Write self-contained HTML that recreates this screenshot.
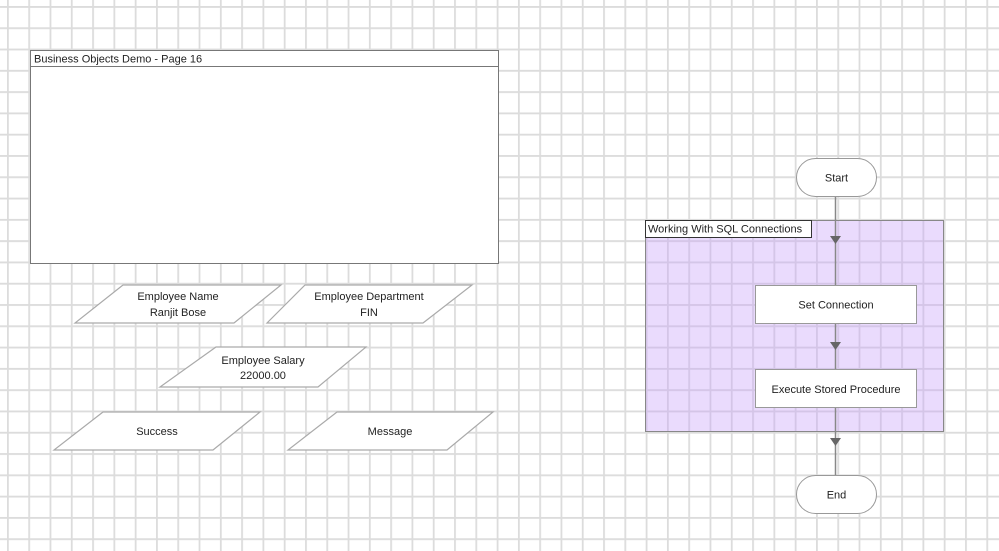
<!DOCTYPE html>
<html><head><meta charset="utf-8"><style>
html,body{margin:0;padding:0;background:#fff;}
svg{display:block;}
text{font-family:"Liberation Sans",sans-serif;font-size:11px;fill:#222;}
</style></head><body>
<svg width="999" height="551" viewBox="0 0 999 551" xmlns="http://www.w3.org/2000/svg">
<defs>
<pattern id="g" x="7" y="6" width="21.29" height="21.29" patternUnits="userSpaceOnUse">
<path d="M0.9 0V21.29M0 0.9H21.29" stroke="#dcdcdc" stroke-width="1.8" fill="none"/>
</pattern>
</defs>
<rect width="999" height="551" fill="#fff"/>
<rect width="999" height="551" fill="url(#g)"/>

<!-- page box -->
<rect x="30.5" y="50.5" width="468" height="213" fill="#fff" stroke="#777"/>
<line x1="30.5" y1="66.5" x2="498.5" y2="66.5" stroke="#777"/>
<text x="34" y="62.5">Business Objects Demo - Page 16</text>

<!-- parallelograms -->
<g fill="#fff" stroke="#aaa" stroke-width="1.2">
<polygon points="123,285 281,285 234,323 75,323"/>
<polygon points="305,285 472,285 423,323 267,323"/>
<polygon points="216,347 366,347 318,387 160,387"/>
<polygon points="103,412 260,412 213,450 54,450"/>
<polygon points="337,412 493,412 447,450 288,450"/>
</g>
<g text-anchor="middle">
<text x="178" y="300">Employee Name</text>
<text x="178" y="316">Ranjit Bose</text>
<text x="369" y="300">Employee Department</text>
<text x="369" y="316">FIN</text>
<text x="263" y="364">Employee Salary</text>
<text x="263" y="379">22000.00</text>
<text x="157" y="435">Success</text>
<text x="390" y="435">Message</text>
</g>

<!-- group -->
<rect x="645.5" y="220.5" width="298" height="211" fill="rgba(200,160,250,0.38)" stroke="#888"/>
<rect x="645.5" y="220.5" width="166" height="17" fill="#fff" stroke="#333"/>
<text x="648" y="232.5">Working With SQL Connections</text>

<!-- connector -->
<line x1="835.5" y1="196" x2="835.5" y2="476" stroke="#888" stroke-width="1.5"/>
<g fill="#666">
<polygon points="830,236 841,236 835.5,244"/>
<polygon points="830,342 841,342 835.5,350"/>
<polygon points="830,438 841,438 835.5,446"/>
</g>

<rect x="796.5" y="158.5" width="80" height="38" rx="19" fill="#fff" stroke="#999"/>
<text x="836.5" y="181.5" text-anchor="middle">Start</text>

<rect x="755.5" y="285.5" width="161" height="38" fill="#fff" stroke="#999"/>
<text x="836" y="308.5" text-anchor="middle">Set Connection</text>

<rect x="755.5" y="369.5" width="161" height="38" fill="#fff" stroke="#999"/>
<text x="836" y="393" text-anchor="middle">Execute Stored Procedure</text>

<rect x="796.5" y="475.5" width="80" height="38" rx="19" fill="#fff" stroke="#999"/>
<text x="836.5" y="498.5" text-anchor="middle">End</text>
</svg>
</body></html>
